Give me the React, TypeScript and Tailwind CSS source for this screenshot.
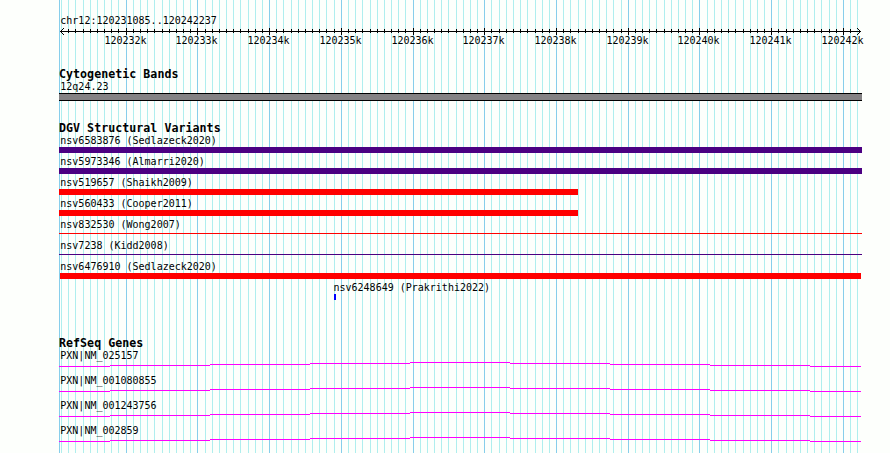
const majors = Array.from({ length: 11 }, (_, i) => Math.round(125.64 + i * 71.73));
const lines = Array.from({ length: 112 }, (_, i) => Math.round(125.64 + (i - 9) * 7.173)).filter((x) => x < 860);

const variants = [
  { label: 'nsv6583876 (Sedlazeck2020)', bar: 'ml-[59px] w-[803px] h-[6px] bg-[#4b0082]' },
  { label: 'nsv5973346 (Almarri2020)', bar: 'ml-[59px] w-[803px] h-[6px] bg-[#4b0082]' },
  { label: 'nsv519657 (Shaikh2009)', bar: 'ml-[59px] w-[519px] h-[6px] bg-[#ff0000]' },
  { label: 'nsv560433 (Cooper2011)', bar: 'ml-[59px] w-[519px] h-[6px] bg-[#ff0000]' },
  { label: 'nsv832530 (Wong2007)', bar: 'ml-[59px] mt-[2px] w-[803px] h-px bg-[#ff0000]' },
  { label: 'nsv7238 (Kidd2008)', bar: 'ml-[59px] mt-[2px] w-[803px] h-px bg-[#4b0082]' },
  { label: 'nsv6476910 (Sedlazeck2020)', bar: 'ml-[60px] w-[801px] h-[6px] bg-[#ff0000]' },
  { label: 'nsv6248649 (Prakrithi2022)', bar: 'ml-[334px] w-[2px] h-[6px] bg-[#0000ff]', pad: 'pl-[333.5px]' },
];

const genes = ['PXN|NM_025157', 'PXN|NM_001080855', 'PXN|NM_001243756', 'PXN|NM_002859'];

const steps = [
  [59, 110, 4], [110, 210, 3], [210, 310, 2], [310, 410, 1], [410, 510, 0],
  [510, 610, 1], [610, 710, 2], [710, 810, 3], [810, 861, 4],
];

function Grid() {
  return (
    <svg className="absolute inset-0 -z-10" width="890" height="453" shapeRendering="crispEdges">
      {lines.map((x) => (
        <rect key={x} x={x} y="0" width="1" height="453" fill="#afeeee" />
      ))}
      {[59, ...majors].map((x) => (
        <rect key={x} x={x} y="0" width="1" height="453" fill="#87ceeb" />
      ))}
    </svg>
  );
}

function Heading({ children }: { children: string }) {
  return (
    <h2 className="h-[13px] pl-[59px] text-[11.63px] leading-[12px] font-bold tracking-[0.03px]">{children}</h2>
  );
}

export default function App() {
  return (
    <main className="relative isolate h-[453px] w-[890px] overflow-hidden bg-[#fdfffc] font-['DejaVu_Sans_Mono','Liberation_Mono',monospace] text-[10px] leading-[12px] whitespace-nowrap text-black">
      <Grid />
      <header className="h-[68px] pt-[15px]">
        <div className="h-[12px] pl-[60.3px]">chr12:120231085..120242237</div>
        <svg className="block h-[8px] w-[890px]" shapeRendering="crispEdges">
          <rect x="60" y="4" width="801" height="1" />
          {lines.filter((x) => x > 62 && x < 855).map((x) => (
            <rect key={x} x={x} y="2" width="1" height="4" />
          ))}
          {majors.map((x) => (
            <rect key={x} x={x} y="1" width="1" height="7" />
          ))}
          {[1, 2, 3].map((d) => (
            <g key={d}>
              <rect x={60 + d} y={4 - d} width="1" height="1" />
              <rect x={60 + d} y={4 + d} width="1" height="1" />
              <rect x={860 - d} y={4 - d} width="1" height="1" />
              <rect x={860 - d} y={4 + d} width="1" height="1" />
            </g>
          ))}
        </svg>
        <div className="flex">
          {majors.map((x, i) => (
            <span key={x} className="w-0" style={{ marginLeft: i ? x - majors[i - 1] : x - 21.6 }}>
              {120232 + i}k
            </span>
          ))}
        </div>
      </header>
      <section className="h-[54px]">
        <Heading>Cytogenetic Bands</Heading>
        <div className="h-[12px] pl-[60.3px]">12q24.23</div>
        <div className="ml-[59px] h-[8px] w-[803px] border-y border-black bg-[#848284]" />
      </section>
      <section className="h-[215px]">
        <Heading>DGV Structural Variants</Heading>
        {variants.map((v) => (
          <div key={v.label} className="h-[21px]">
            <div className={`h-[12px] ${v.pad ?? 'pl-[60.3px]'}`}>{v.label}</div>
            <div className={v.bar} />
          </div>
        ))}
      </section>
      <section>
        <Heading>RefSeq Genes</Heading>
        {genes.map((g) => (
          <div key={g} className="h-[25px]">
            <div className="h-[12px] pl-[60.3px]">{g}</div>
            <svg className="block h-[6px] w-[890px]" shapeRendering="crispEdges">
              {steps.map(([a, b, y]) => (
                <rect key={a} x={a} y={y} width={b - a} height="1" fill="#ff00ff" />
              ))}
            </svg>
          </div>
        ))}
      </section>
    </main>
  );
}
